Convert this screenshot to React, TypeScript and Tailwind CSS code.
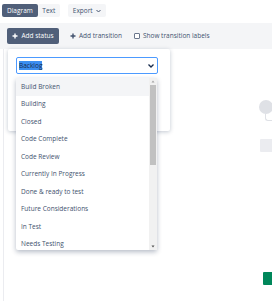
import React from "react";

const statuses = [
  "Build Broken",
  "Building",
  "Closed",
  "Code Complete",
  "Code Review",
  "Currently In Progress",
  "Done & ready to test",
  "Future Considerations",
  "In Test",
  "Needs Testing",
];

const Plus = () => (
  <svg width="6" height="6" viewBox="0 0 6 6" className="shrink-0">
    <path d="M3 0.5v5M0.5 3h5" stroke="currentColor" strokeWidth="1.4" />
  </svg>
);

export default function App() {
  return (
    <div
      className="relative w-[272px] h-[301px] overflow-hidden bg-white text-[#42526e] text-[6.5px]"
      style={{ fontFamily: '"Open Sans", "Noto Sans", sans-serif' }}
    >
      {/* tabs */}
      <div className="flex items-center h-[13px] mt-[4px] ml-[2px]">
        <div className="h-full px-[5px] flex items-center bg-[#505f79] text-white rounded-[2px]">Diagram</div>
        <div className="h-full w-[22px] flex items-center justify-center bg-[#f4f5f7] rounded-[2px]">Text</div>
        <div className="h-full ml-[8px] px-[5px] flex items-center gap-[3px] bg-[#f4f5f7] rounded-[2px]">
          Export
          <svg width="5" height="4" viewBox="0 0 5 4">
            <path d="M0.5 1l2 2 2-2" stroke="currentColor" strokeWidth="1" fill="none" />
          </svg>
        </div>
      </div>

      {/* toolbar */}
      <div className="flex items-center h-[26px] mt-[6px] bg-[#f4f5f7] pl-[7px]">
        <div className="h-[16px] w-[52px] flex items-center justify-center gap-[3px] bg-[#505f79] text-white rounded-[2px]">
          <Plus />
          Add status
        </div>
        <div className="ml-[11px] flex items-center gap-[3px]">
          <Plus />
          Add transition
        </div>
        <div className="ml-[12px] flex items-center gap-[3px]">
          <div className="w-[6px] h-[6px] border border-[#6b778c] rounded-[1px] bg-white" />
          Show transition labels
        </div>
      </div>

      {/* canvas */}
      <div className="relative h-[252px] ml-[3px] border-l border-[#ebecf0]">
        {/* diagram nodes */}
        <div className="absolute left-[255px] top-[51px] w-[14px] h-[14px] rounded-full bg-[#dfe1e6]" />
        <div className="absolute left-[261px] top-[65px] w-[10px] h-[7px] border-l border-b border-[#dfe1e6] rounded-bl-[3px]" />
        <div className="absolute left-[256px] top-[90px] w-[20px] h-[13px] bg-[#ebecf0] rounded-[1px]" />
        <div className="absolute left-[259px] top-[223px] w-[20px] h-[13px] bg-[#00875a] rounded-[1px]" />

        {/* add status dialog */}
        <div className="absolute left-[4px] top-[0px] w-[162px] h-[82px] bg-white rounded-[2px] shadow-[0_1px_4px_rgba(9,30,66,0.25)] pt-[8px] px-[8px]">
          <div className="h-[17px] w-[142px] flex items-center justify-between border-[1.5px] border-[#4c9aff] rounded-[2px] px-[2px] text-[#172b4d]">
            <span className="bg-[#3b8ef0] text-[#172b4d] leading-[9px]">Backlog</span>
            <svg width="6" height="4" viewBox="0 0 6 4" className="mr-[1px]">
              <path d="M0.5 0.5l2.5 2.5 2.5-2.5" stroke="#172b4d" strokeWidth="1.3" fill="none" />
            </svg>
          </div>
        </div>

        {/* dropdown list */}
        <div className="absolute left-[12px] top-[29px] w-[141px] h-[172px] bg-white flex shadow-[0_2px_5px_rgba(9,30,66,0.3)] rounded-b-[2px]">
          <div className="flex-1 flex flex-col">
            {statuses.map((s, i) => (
              <div
                key={s}
                className={`h-[17.5px] shrink-0 flex items-center pl-[5px] ${i === 0 ? "bg-[#f4f5f7]" : ""}`}
              >
                {s}
              </div>
            ))}
          </div>
          <div className="w-[8px] bg-[#f1f1f1] flex flex-col items-center">
            <svg width="8" height="7" viewBox="0 0 8 7" className="shrink-0">
              <path d="M2.5 4.5h3l-1.5-2z" fill="#a3a3a3" />
            </svg>
            <div className="w-[6px] h-[80px] bg-[#c1c1c1]" />
            <div className="flex-1" />
            <svg width="8" height="7" viewBox="0 0 8 7" className="shrink-0">
              <path d="M2.5 2.5h3l-1.5 2z" fill="#505050" />
            </svg>
          </div>
        </div>
      </div>
    </div>
  );
}
